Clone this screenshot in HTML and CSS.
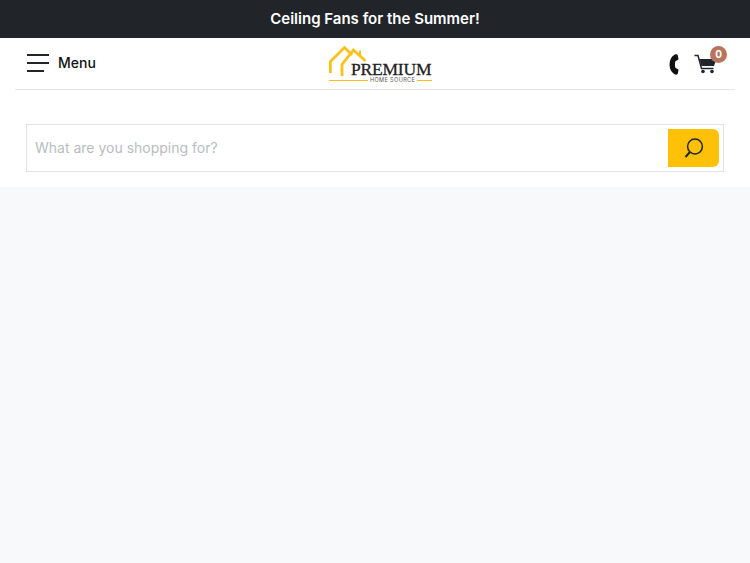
FILE: index.html
```html
<!DOCTYPE html>
<html lang="en">
<head>
    <meta charset="UTF-8">
    <meta name="viewport" content="width=device-width, initial-scale=1.0">
    <title>Premium Home Source</title>
    <link rel="stylesheet" href="styles.css">
</head>
<body>
    <div class="promo">Ceiling Fans for the Summer!</div>
    <div class="top">
        <div class="header">
            <a href="#" class="menu">
                <span class="burger"><i></i><i></i><i></i></span>
                <span>Menu</span>
            </a>
            <a href="#" class="logo">
                <svg class="roof" width="62" height="32" viewBox="0 0 62 32" fill="none" stroke="#fdc018" stroke-width="2.800">
                    <path d="M1.400 27V15.500L15.500 1.500L23 9"/>
                    <path d="M13 30V18.500L24.500 4L36.500 15"/>
                    <path d="M31 9V4.500" stroke-width="2"/>
                </svg>
                <span class="logo-name">PREMIUM</span>
                <span class="logo-sub">HOME SOURCE</span>
            </a>
            <div class="actions">
                <svg width="10" height="21" viewBox="0 0 10 21">
                    <path d="M5.500 0.800C7 0 8.500 0.300 8.800 1.500L9.500 5C9.500 6 7 6.500 6.300 7.500C5.800 9 5.800 12 6.300 13.500C7 14.500 9.500 15 9.500 16L8.800 19.500C8.500 20.700 7 21 5.500 20.200C2.500 18.500 0.500 15 0.500 10.500C0.500 6 2.500 2.500 5.500 0.800Z" fill="#111"/>
                </svg>
                <a href="#" class="cart">
                    <svg width="23" height="20" viewBox="0 0 23 20">
                        <path d="M0.500 1.500H4L7.500 14.500H19.500" fill="none" stroke="#212529" stroke-width="1.500"/>
                        <path d="M5.500 5H22.500L20 12H7.500Z" fill="#212529"/>
                        <circle cx="9" cy="17.500" r="1.800" fill="#212529"/>
                        <circle cx="18" cy="17.500" r="1.800" fill="#212529"/>
                    </svg>
                    <span class="badge">0</span>
                </a>
            </div>
        </div>
        <form class="search">
            <input type="text" placeholder="What are you shopping for?">
            <button type="button">
                <svg width="20" height="21" viewBox="0 0 20 21" fill="none" stroke="#212529">
                    <circle cx="11" cy="8.500" r="7.400" stroke-width="1.500"/>
                    <path d="M6 14L1.500 19" stroke-width="2"/>
                </svg>
            </button>
        </form>
    </div>
    <div class="content"></div>
</body>
</html>
```

FILE: styles.css
```css
* {
    margin: 0;
    padding: 0;
    box-sizing: border-box;
}
html, body {
    height: 100%;
}
body {
    display: flex;
    flex-direction: column;
    font-family: "Inter", "Liberation Sans", sans-serif;
    background-color: #fff;
    color: #212529;
}
a {
    text-decoration: none;
    color: inherit;
}
.promo {
    height: 38px;
    background-color: #212529;
    color: #fff;
    font-size: 15px;
    font-weight: 600;
    line-height: 37px;
    text-align: center;
}
.top {
    height: 149px;
    padding: 0 15px;
}
.header {
    height: 52px;
    border-bottom: 1px solid #e6e7e8;
    padding: 0 7px 0 12px;
    display: flex;
    align-items: center;
    justify-content: space-between;
    position: relative;
}
.menu {
    display: flex;
    align-items: center;
    gap: 9px;
    font-size: 14px;
    font-weight: 500;
    color: #111;
    margin-top: -2px;
}
.burger {
    width: 22px;
    display: flex;
    flex-direction: column;
    gap: 6px;
}
.burger i {
    display: block;
    height: 2px;
    background-color: #212529;
}
.burger i:last-child {
    width: 17px;
}
.logo {
    position: absolute;
    left: 314px;
    top: 8px;
    width: 103px;
    height: 36px;
}
.roof {
    display: block;
    position: absolute;
    left: 0;
    top: 0;
}
.logo-name {
    position: absolute;
    left: 22px;
    top: 17px;
    font-family: "Liberation Serif", serif;
    font-size: 17.500px;
    line-height: 13px;
    letter-spacing: -0.200px;
    color: #222;
    -webkit-text-stroke: 0.300px #222;
}
.logo-sub {
    position: absolute;
    left: 0;
    right: 0;
    top: 32px;
    height: 5px;
    display: flex;
    align-items: center;
    gap: 2px;
    font-size: 5.500px;
    line-height: 5px;
    letter-spacing: 0.400px;
    color: #555;
}
.logo-sub::before,
.logo-sub::after {
    content: "";
    height: 1.500px;
    background-color: #fdc018;
}
.logo-sub::before {
    width: 39px;
}
.logo-sub::after {
    flex: 1;
}
.actions {
    display: flex;
    align-items: center;
    gap: 15px;
    margin-top: 1px;
}
.cart {
    display: block;
    position: relative;
    height: 20px;
    margin-right: 11px;
}
.cart svg {
    display: block;
}
.badge {
    position: absolute;
    left: 16px;
    top: -8px;
    width: 17px;
    height: 17px;
    border-radius: 50%;
    background-color: #b9745e;
    color: #fff;
    font-size: 10px;
    font-weight: 700;
    line-height: 17px;
    text-align: center;
}
.search {
    height: 48px;
    margin: 34px 11px 0;
    border: 1px solid #e2e3e4;
    display: flex;
    align-items: center;
    padding-right: 4px;
}
.search input {
    flex: 1;
    height: 100%;
    border: none;
    outline: none;
    background: none;
    padding: 0 0 2px 8px;
    font-family: inherit;
    font-size: 14px;
}
.search input::placeholder {
    color: #b9bcbf;
}
.search button {
    width: 51px;
    height: 38px;
    border: none;
    border-radius: 0 6px 6px 0;
    background-color: #ffc107;
    display: flex;
    align-items: center;
    justify-content: center;
    cursor: pointer;
}
.content {
    flex: 1;
    background-color: #f8f9fa;
}
```
